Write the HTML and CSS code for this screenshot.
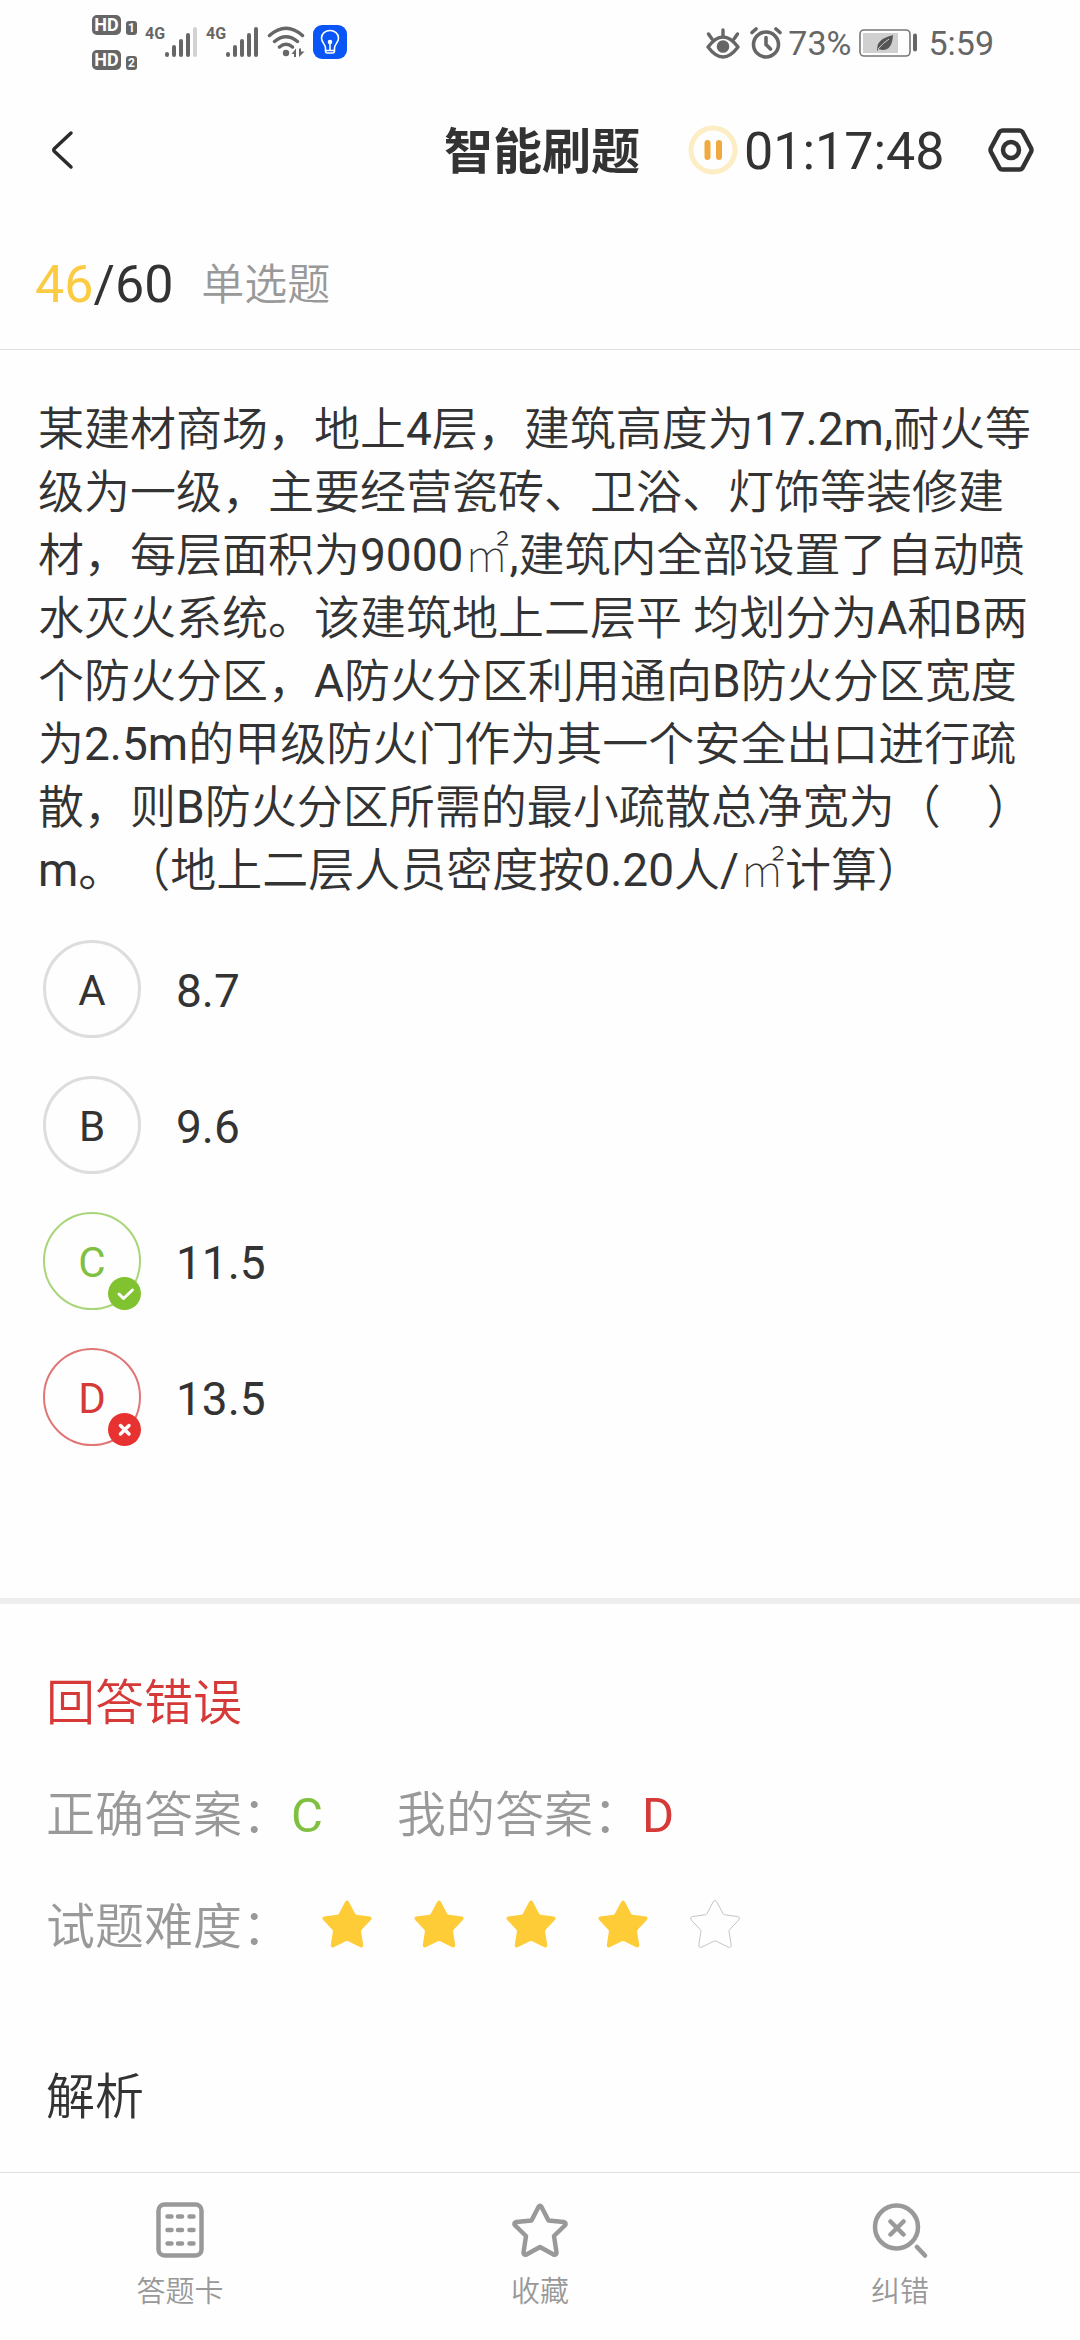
FILE: index.html
```html
<!DOCTYPE html>
<html lang="zh-CN">
<head>
<meta charset="utf-8">
<meta name="viewport" content="width=device-width, initial-scale=1">
<title>智能刷题</title>
<link rel="stylesheet" href="styles.css">
</head>
<body>
<svg class="defs" width="0" height="0" aria-hidden="true">
  <symbol id="star" viewBox="0 0 52 50">
    <path d="M24.200 2.800Q26 0 27.800 2.800L34 14.500Q34.500 15.500 35.600 15.700L48.800 17.600Q51.800 18.400 49.800 20.900L40.600 30.700Q39.900 31.500 40.100 32.600L42.200 46Q42.300 49.200 39.400 48.200L27.200 42.200Q26 41.700 24.800 42.200L12.600 48.200Q9.700 49.200 9.800 46L11.900 32.600Q12.100 31.500 11.400 30.700L2.200 20.900Q0.200 18.400 3.200 17.600L16.400 15.700Q17.500 15.500 18 14.500Z"/>
  </symbol>
</svg>

<div class="status">
  <div class="status-left">
    <div class="hd-list">
      <div class="hd"><span class="hd-label">HD</span><span class="hd-sim">1</span></div>
      <div class="hd"><span class="hd-label">HD</span><span class="hd-sim">2</span></div>
    </div>
    <div class="signal">
      <span class="signal-type">4G</span>
      <svg width="34" height="31" viewBox="0 0 34 31" stroke="#666" stroke-width="4" stroke-linecap="round"><path d="M3 27v1M10 20v8M17 14v14M24 8v20"/><path d="M31 2v26" stroke="#d2d2d2"/></svg>
    </div>
    <div class="signal">
      <span class="signal-type">4G</span>
      <svg width="34" height="31" viewBox="0 0 34 31" stroke="#666" stroke-width="4" stroke-linecap="round"><path d="M3 27v1M10 20v8M17 14v14M24 8v20M31 2v26"/></svg>
    </div>
    <svg class="wifi" width="38" height="32" viewBox="0 0 38 32" fill="none" stroke="#666" stroke-width="3.500" stroke-linecap="round"><path d="M2.500 9.500Q19-5 35.500 9.500M7.500 15.500Q19 6 30.500 15.500M12.500 21Q19 15.500 25.500 21"/><circle cx="19" cy="27" r="3.200" fill="#666" stroke="none"/><path d="M29 22.500v8.500h-2v-3h-2.500zM32 31v-8.500h2v3h3.500z" fill="#666" stroke="none"/></svg>
    <svg width="34" height="34" viewBox="0 0 34 34" fill="none" stroke="#fff" stroke-width="1.600"><rect width="34" height="34" rx="9" fill="#0a55f5" stroke="none"/><path d="M12.500 23c0-4-4-5-4-10a8.500 7.500 0 0 1 17 0c0 5-4 6-4 10v3q0 2-2 2h-5q-2 0-2-2zM12.500 25.500h9M17 18v7"/><circle cx="17" cy="17" r="1.500" fill="#fff"/></svg>
  </div>
  <div class="status-right">
    <svg width="34" height="31" viewBox="0 0 34 31" fill="none" stroke="#666" stroke-width="3.400" stroke-linecap="round"><path d="M2 19Q17-1 32 19Q17 39 2 19Z" stroke-linejoin="round"/><circle cx="17" cy="18.500" r="6.300" fill="#666" stroke="none"/><path d="M17 2v6M2.500 6l3.500 5M31.500 6L28 11"/></svg>
    <svg class="alarm" width="32" height="32" viewBox="0 0 32 32" fill="none" stroke="#666" stroke-width="3.600" stroke-linecap="round"><circle cx="16" cy="17.500" r="12.500"/><path d="M16 10.500v7l4.500 4.500M2 5.500L6 2M30 5.500L26 2"/></svg>
    <span class="status-text battery-text">73%</span>
    <svg class="battery" width="58" height="28" viewBox="0 0 58 28"><rect x="1" y="1" width="50" height="26" rx="4" fill="none" stroke="#777" stroke-width="1.600"/><rect x="4" y="4" width="35" height="20" fill="#d0d0d0"/><path d="M18 22q0-4 1-7q3-6 15-9q-1 16-11 15q-2-.4-3.500-1q-1 2-1.500 2z" fill="#555"/><path d="M19 20q5-6 11-10" stroke="#d0d0d0" fill="none"/><path d="M56 6.500v14" stroke="#666" stroke-width="4" stroke-linecap="round"/></svg>
    <span class="status-text">5:59</span>
  </div>
</div>

<header class="topbar">
  <button class="icon-button" type="button" aria-label="返回"><svg width="24" height="40" viewBox="0 0 24 40" fill="none" stroke="#2b2b2b" stroke-width="3.500" stroke-linecap="round" stroke-linejoin="round"><path d="M21 3L4.500 18.500Q3 20 4.500 21.500L21 37"/></svg></button>
  <h1 class="title">智能刷题</h1>
  <div class="tools">
    <button class="timer" type="button" aria-label="暂停">
      <svg width="50" height="50" viewBox="0 0 50 50"><circle cx="25" cy="25" r="22" fill="none" stroke="#fdedc4" stroke-width="5"/><path d="M19.500 18v14M31 18v14" stroke="#f0a93f" stroke-width="6" stroke-linecap="round"/></svg>
      <span class="time">01:17:48</span>
    </button>
    <button class="icon-button" type="button" aria-label="设置"><svg width="46" height="44" viewBox="0 0 46 44" fill="none" stroke="#333" stroke-width="4.500" stroke-linejoin="round"><path d="M14.500 2.500h17q2 0 3 1.500l8.500 16q1 2 0 4L34.500 40q-1 1.500-3 1.500h-17q-2 0-3-1.500L3 24q-1-2 0-4L11.500 4q1-1.500 3-1.500z"/><circle cx="23" cy="22" r="8"/></svg></button>
  </div>
</header>

<div class="progress">
  <p class="count"><span class="count-now">46</span>/60</p>
  <p class="kind">单选题</p>
</div>

<main class="content">
  <form class="quiz">
    <p class="question" id="question">某建材商场，地上<span class="latin">4</span>层，建筑高度为<span class="latin">17.2m,</span>耐火等级为一级，主要经营瓷砖、卫浴、灯饰等装修建材，每层面积为<span class="latin">9000</span><span class="unit">㎡</span><span class="latin">,</span>建筑内全部设置了自动喷水灭火系统。该建筑地上二层平 均划分为<span class="latin">A</span>和<span class="latin">B</span>两个防火分区，<span class="latin">A</span>防火分区利用通向<span class="latin">B</span>防火分区宽度为<span class="latin">2.5m</span>的甲级防火门作为其一个安全出口进行疏散，则<span class="latin">B</span>防火分区所需的最小疏散总净宽为（　）<span class="latin">m</span>。（地上二层人员密度按<span class="latin">0.20</span>人<span class="latin">/</span><span class="unit">㎡</span>计算）</p>
    <div class="options" role="radiogroup" aria-labelledby="question">
      <label class="option">
        <span class="mark"><input class="radio" type="radio" name="answer" value="A"><span class="letter">A</span></span>
        <span class="choice">8.7</span>
      </label>
      <label class="option">
        <span class="mark"><input class="radio" type="radio" name="answer" value="B"><span class="letter">B</span></span>
        <span class="choice">9.6</span>
      </label>
      <label class="option option-right">
        <span class="mark"><input class="radio" type="radio" name="answer" value="C"><span class="letter">C</span>
          <svg class="badge" width="33" height="33" viewBox="0 0 33 33" fill="none" stroke="#fff" stroke-width="3" stroke-linecap="round" stroke-linejoin="round"><circle cx="16.500" cy="16.500" r="16.500" fill="#80c22f" stroke="none"/><path d="M11 17l4.500 4.500L24.500 13"/></svg></span>
        <span class="choice">11.5</span>
      </label>
      <label class="option option-wrong">
        <span class="mark"><input class="radio" type="radio" name="answer" value="D" checked><span class="letter">D</span>
          <svg class="badge" width="33" height="33" viewBox="0 0 33 33" fill="none" stroke="#fff" stroke-width="3.500" stroke-linecap="round"><circle cx="16.500" cy="16.500" r="16.500" fill="#e83232" stroke="none"/><path d="M12.500 12.500l8.500 8.500M21 12.500L12.500 21"/></svg></span>
        <span class="choice">13.5</span>
      </label>
    </div>
  </form>

  <section class="result">
    <p class="verdict">回答错误</p>
    <div class="answers">
      <p>正确答案：<span class="right">C</span></p>
      <p>我的答案：<span class="wrong">D</span></p>
    </div>
    <div class="difficulty">
      <p>试题难度：</p>
      <div class="stars" role="img" aria-label="4 / 5">
        <svg class="star"><use href="#star"/></svg>
        <svg class="star"><use href="#star"/></svg>
        <svg class="star"><use href="#star"/></svg>
        <svg class="star"><use href="#star"/></svg>
        <svg class="star star-empty"><use href="#star"/></svg>
      </div>
    </div>
    <h2 class="analysis">解析</h2>
  </section>
</main>

<nav class="tabs">
  <button class="tab" type="button">
    <svg width="48" height="56" viewBox="0 0 48 56" fill="none" stroke="#999" stroke-width="4.500" stroke-linecap="round"><rect x="2.500" y="2.500" width="43" height="51" rx="6"/><path d="M11.500 14.500h4M22 14.500h4M33.500 14.500h4M11.500 28h4M22 28h4M33.500 28h4M11.500 41.500h4M22 41.500h4M33.500 41.500h4"/></svg>
    <span>答题卡</span>
  </button>
  <button class="tab" type="button">
    <svg width="60" height="56" viewBox="0 0 60 56" fill="none" stroke="#999" stroke-width="4.500" stroke-linejoin="round"><path d="M28.500 5Q30 2.500 31.500 5L38.500 18.500L53.500 20Q57 20.800 54.800 23.500L44 34L46.500 50.500Q46.500 53.500 43.500 52.500L30 45L16.500 52.500Q13.500 53.500 13.500 50.500L16 34L5.200 23.500Q3 20.800 6.500 20L21.500 18.500Z"/></svg>
    <span>收藏</span>
  </button>
  <button class="tab" type="button">
    <svg width="56" height="56" viewBox="0 0 56 56" fill="none" stroke="#999" stroke-width="4.500" stroke-linecap="round"><circle cx="24.500" cy="25" r="21.500"/><path d="M18.500 19.500l13 13M31.500 19.500l-13 13M45 45l8 8.500"/></svg>
    <span>纠错</span>
  </button>
</nav>
</body>
</html>
```
FILE: styles.css
```css
* { box-sizing: border-box; }

body {
  display: flex;
  flex-direction: column;
  min-height: 100vh;
  margin: 0;
  background: #fefefe;
  color: #333;
  font-family: Roboto, "Noto Sans CJK SC", sans-serif;
  text-spacing-trim: space-all;
}

h1, h2, p { margin: 0; font-weight: inherit; }

button {
  padding: 0;
  border: 0;
  background: none;
  color: inherit;
  font: inherit;
}

svg { display: block; flex: none; }

.defs { position: absolute; }

/* Status bar */
.status {
  display: flex;
  justify-content: space-between;
  height: 84px;
  padding: 0 86px 0 92px;
  color: #666;
}

.status-left, .status-right { display: flex; align-items: center; }
.status-left { gap: 8px; }

.hd-list { display: grid; gap: 15px; }
.hd { display: flex; align-items: flex-end; gap: 5px; }

.hd-label, .hd-sim {
  border-radius: 5px;
  background: #666;
  color: #fefefe;
  font-weight: 700;
  text-align: center;
}

.hd-label { width: 29px; font-size: 18px; line-height: 20px; }
.hd-sim { width: 11px; border-radius: 3px; font-size: 12px; line-height: 14px; }

.signal { display: flex; align-items: flex-start; }
.signal-type {
  width: 19px;
  font-size: 16px;
  font-weight: 700;
  line-height: 14px;
}

.status-right { padding-top: 2px; }
.status-text { font-size: 34px; line-height: 40px; }
.alarm { margin: 0 6px 0 10px; }
.battery { margin: 0 11px 0 8px; }

/* Top bar */
.topbar {
  display: grid;
  grid-template-columns: 1fr auto 1fr;
  align-items: center;
  height: 132px;
  padding: 0 46px 0 50px;
}

.icon-button { justify-self: start; }
.title { padding-top: 6px; font-size: 49px; font-weight: 700; line-height: 64px; }
.tools { display: flex; align-items: center; justify-content: space-between; padding-left: 48px; }
.timer { display: flex; align-items: center; gap: 6px; font-size: 52px; line-height: 64px; }
.time { padding-top: 4px; }

/* Progress row */
.progress {
  display: flex;
  align-items: center;
  gap: 28px;
  height: 134px;
  padding: 4px 35px 0;
  border-bottom: 1px solid #e0e0e0;
}

.count { font-size: 52px; line-height: 64px; }
.count-now { color: #fbcb43; }
.kind { color: #999; font-size: 43px; font-weight: 350; line-height: 64px; }

/* Question and options */
.content { flex: 1; }
.quiz { padding: 48px 38px 152px; }
.question { font-size: 46px; font-weight: 350; line-height: 63px; }
.latin { font-weight: 400; }
.unit { font-weight: 100; }

.options { display: grid; gap: 38px; padding: 38px 5px 0; }
.option { display: flex; align-items: center; gap: 35px; font-size: 46px; line-height: 64px; }

.mark { position: relative; display: grid; place-items: center; color: #333; }
.radio, .letter { grid-area: 1 / 1; }
.letter { font-size: 42px; }
.letter, .choice { padding-top: 4px; }

.radio {
  appearance: none;
  width: 98px;
  height: 98px;
  margin: 0;
  border: 3px solid #ddd;
  border-radius: 50%;
}

.badge { position: absolute; right: 0; bottom: 0; }
.option-right .radio { border: 2px solid #a9d57a; }
.option-right .mark, .right { color: #80c040; }
.option-wrong .radio { border: 2px solid #e07676; }
.option-wrong .mark, .wrong { color: #d63a38; }

/* Result */
.result {
  display: grid;
  gap: 48px;
  padding: 68px 46px 32px;
  border-top: 6px solid #eee;
  color: #999;
  font-size: 49px;
  font-weight: 350;
  line-height: 64px;
}

.verdict { color: #d63a38; }
.right, .wrong { font-weight: 400; }
.answers { display: flex; gap: 74px; }
.difficulty { display: flex; align-items: flex-start; gap: 30px; }
.stars { display: flex; gap: 40px; padding-top: 3px; }
.star { width: 52px; height: 50px; fill: #fecc36; }
.star-empty { fill: none; stroke: #c4c4c4; stroke-width: 1px; }
.analysis { padding-top: 58px; color: #333; font-size: 49px; }

/* Bottom tabs */
.tabs {
  position: sticky;
  bottom: 0;
  display: grid;
  grid-template-columns: repeat(3, 1fr);
  padding: 29px 0 28px;
  border-top: 1px solid #e0e0e0;
  background: #fefefe;
}

.tab {
  display: grid;
  justify-items: center;
  gap: 14px;
  color: #999;
  font-size: 29px;
  font-weight: 350;
  line-height: 40px;
}
```
